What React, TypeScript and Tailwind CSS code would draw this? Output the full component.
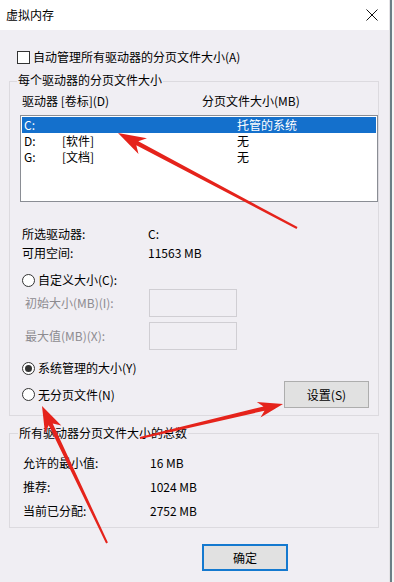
import React from "react";

type Pt = [number, number];

// polygon for a red annotation arrow, tail -> tip
const arrowPoints = (tail: Pt, tip: Pt, len: number, half: number) => {
	const dx = tip[0] - tail[0];
	const dy = tip[1] - tail[1];
	const l = Math.hypot(dx, dy);
	const ux = dx / l;
	const uy = dy / l;
	const nx = -uy;
	const ny = ux;
	const at = (d: number, w: number): string =>
		`${(tip[0] - ux * d + nx * w).toFixed(1)},${(tip[1] - uy * d + ny * w).toFixed(1)}`;
	return [
		at(l, 1),
		at(len * 0.78, 2.2),
		at(len, half),
		`${tip[0]},${tip[1]}`,
		at(len, -half),
		at(len * 0.78, -2.2),
		at(l, -1),
	].join(" ");
};

const Radio = ({ checked }: { checked?: boolean }) => (
	<span className="w-[13px] h-[13px] rounded-full border border-[#333] bg-white flex items-center justify-center shrink-0">
		{checked && <span className="w-[7px] h-[7px] rounded-full bg-[#333]" />}
	</span>
);

const App = () => {
	const drives = [
		{ d: "C:", label: "", size: "托管的系统", selected: true },
		{ d: "D:", label: "[软件]", size: "无" },
		{ d: "G:", label: "[文档]", size: "无" },
	];

	return (
		<div className="relative w-[394px] h-[582px] flex bg-white overflow-hidden text-[12px] text-black font-['Noto_Sans_CJK_SC',sans-serif]">
			<div className="w-[389px] flex flex-col">
				{/* title bar */}
				<div className="h-[30px] bg-white flex items-center justify-between pl-[6px] pr-[10px] shrink-0">
					<span className="leading-[16px]">虚拟内存</span>
					<svg width="12" height="12" viewBox="0 0 12 12" className="mr-[1px]">
						<path d="M0.5 0.5L11.5 11.5M11.5 0.5L0.5 11.5" stroke="#111" strokeWidth="1" />
					</svg>
				</div>

				<div className="flex-1 bg-[#f0eef3] pt-[20px]">
					<div className="flex items-center gap-[3px] pl-[17px] h-[14px]">
						<span className="w-[13px] h-[13px] border border-[#333] bg-white shrink-0" />
						<span className="leading-[14px]">自动管理所有驱动器的分页文件大小(A)</span>
					</div>

					{/* per-drive group */}
					<div className="relative mt-[17px] ml-[9px] w-[370px] h-[335px] border border-[#dcdadf]">
						<span className="absolute -top-[10px] left-[7px] px-[1px] leading-[16px] bg-[#f0eef3]">
							每个驱动器的分页文件大小
						</span>

						<div className="flex mt-[11px] pl-[12px] leading-[16px]">
							<span className="w-[180px]">驱动器 [卷标](D)</span>
							<span>分页文件大小(MB)</span>
						</div>

						<div className="mt-[6px] ml-[10px] w-[358px] h-[87px] border border-[#8a8d94] bg-white p-[1px]">
							{drives.map((r) => (
								<div
									key={r.d}
									className={`flex h-[16px] leading-[16px] pl-[2px] ${
										r.selected ? "bg-[#1470cc] text-white" : ""
									}`}
								>
									<span className="w-[38px]">{r.d}</span>
									<span className="w-[175px]">{r.label}</span>
									<span>{r.size}</span>
								</div>
							))}
						</div>

						<div className="mt-[24px] pl-[12px] leading-[16px]">
							<div className="flex">
								<span className="w-[126px]">所选驱动器:</span>
								<span>C:</span>
							</div>
							<div className="flex mt-[3px]">
								<span className="w-[126px]">可用空间:</span>
								<span>11563 MB</span>
							</div>
						</div>

						<div className="mt-[11px] pl-[12px] flex items-center gap-[3px] h-[16px]">
							<Radio />
							<span className="leading-[16px]">自定义大小(C):</span>
						</div>

						<div className="mt-[1px] pl-[15px] flex items-center h-[28px] text-[#8d8b90]">
							<span className="w-[124px]">初始大小(MB)(I):</span>
							<span className="w-[88px] h-[28px] border border-[#d0ced3] bg-[#f0eef3]" />
						</div>
						<div className="mt-[5px] pl-[15px] flex items-center h-[28px] text-[#8d8b90]">
							<span className="w-[124px]">最大值(MB)(X):</span>
							<span className="w-[88px] h-[28px] border border-[#d0ced3] bg-[#f0eef3]" />
						</div>

						<div className="mt-[10px] pl-[12px] flex items-center gap-[3px] h-[16px]">
							<Radio checked />
							<span className="leading-[16px]">系统管理的大小(Y)</span>
						</div>

						<div className="mt-[5px] pl-[12px] pr-[9px] flex items-center justify-between h-[27px]">
							<div className="flex items-center gap-[3px]">
								<Radio />
								<span className="leading-[16px]">无分页文件(N)</span>
							</div>
							<button className="w-[85px] h-[27px] border border-[#adadad] bg-[#e1e1e1] leading-[16px]">
								设置(S)
							</button>
						</div>
					</div>

					{/* totals group */}
					<div className="relative mt-[17px] ml-[9px] w-[370px] h-[95px] border border-[#dcdadf]">
						<span className="absolute -top-[9px] left-[8px] px-[1px] leading-[16px] bg-[#f0eef3]">
							所有驱动器分页文件大小的总数
						</span>
						<div className="mt-[17px] pl-[13px] leading-[24px]">
							<div className="flex">
								<span className="w-[127px]">允许的最小值:</span>
								<span>16 MB</span>
							</div>
							<div className="flex">
								<span className="w-[127px]">推荐:</span>
								<span>1024 MB</span>
							</div>
							<div className="flex">
								<span className="w-[127px]">当前已分配:</span>
								<span>2752 MB</span>
							</div>
						</div>
					</div>

					<button className="mt-[16px] ml-[202px] w-[86px] h-[27px] border-2 border-[#1479cf] bg-[#e1e1e1] leading-[16px]">
						确定
					</button>
				</div>
			</div>
			<div className="w-[1px] bg-[#e4e3e6]" />
			<div className="w-[2px] bg-[#6b7f86]" />
			<div className="w-[2px] bg-[#f5f5f5]" />

			{/* red annotation arrows */}
			<svg className="absolute inset-0 pointer-events-none" width="394" height="582" viewBox="0 0 394 582">
				<polygon points={arrowPoints([297, 228], [118, 133], 28, 9)} fill="#e5231b" />
				<polygon points={arrowPoints([140, 438], [283, 404], 25, 8)} fill="#e5231b" />
				<polygon points={arrowPoints([107, 543], [42, 406], 26, 9)} fill="#e5231b" />
			</svg>
		</div>
	);
};

export default App;
